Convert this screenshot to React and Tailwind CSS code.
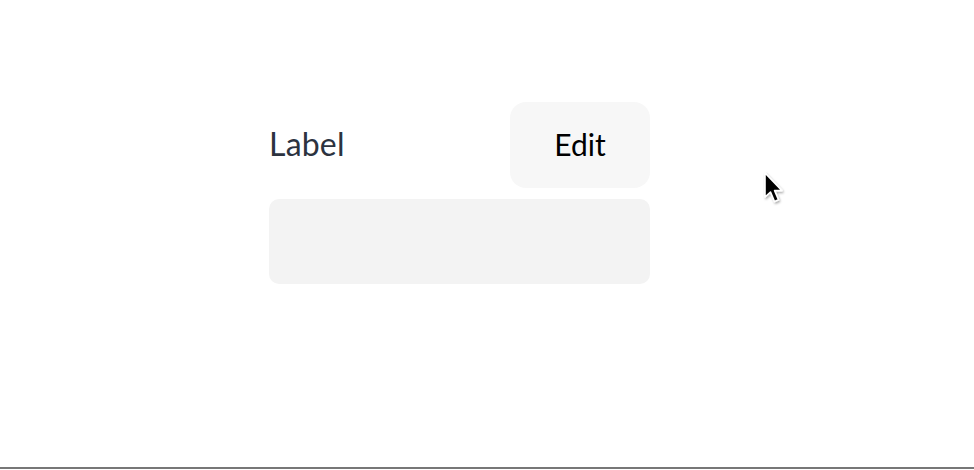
import React from "react";

const Cursor = () => (
  <svg
    className="absolute left-[762px] top-[171px]"
    width="26"
    height="38"
    viewBox="0 0 26 38"
  >
    <defs>
      <filter id="sh" x="-30%" y="-30%" width="160%" height="160%">
        <feDropShadow dx="1" dy="1.5" stdDeviation="1.2" floodColor="#000" floodOpacity="0.35" />
      </filter>
    </defs>
    {/* arrow pointer */}
    <path
      d="M3 2 L3 26 L8.5 21 L12.5 30.5 L16.5 28.8 L12.6 19.6 L20 19.6 Z"
      fill="#000"
      stroke="#fff"
      strokeWidth="1.6"
      strokeLinejoin="round"
      filter="url(#sh)"
    />
  </svg>
);

export default function App() {
  return (
    <div className="relative h-[470px] w-full overflow-hidden bg-white flex flex-col font-['Lato',sans-serif]">
      <div className="flex-1 pl-[269px] pt-[102px]">
        <div className="w-[381px] flex flex-col gap-[11px]">
          {/* header row */}
          <div className="flex items-center justify-between">
            <span className="text-[32px] leading-none font-normal text-[#2c333f] tracking-[0.2px] mb-[3px]">
              Label
            </span>
            <button className="w-[140px] h-[86px] rounded-[16px] bg-[#f7f7f7] text-[30px] leading-none font-normal text-black pb-[2px]">
              Edit
            </button>
          </div>
          {/* value field */}
          <div className="h-[85px] rounded-[10px] bg-[#f3f3f3]" />
        </div>
      </div>
      <div className="h-[2px] bg-[#777777] mb-px" />
      <Cursor />
    </div>
  );
}
